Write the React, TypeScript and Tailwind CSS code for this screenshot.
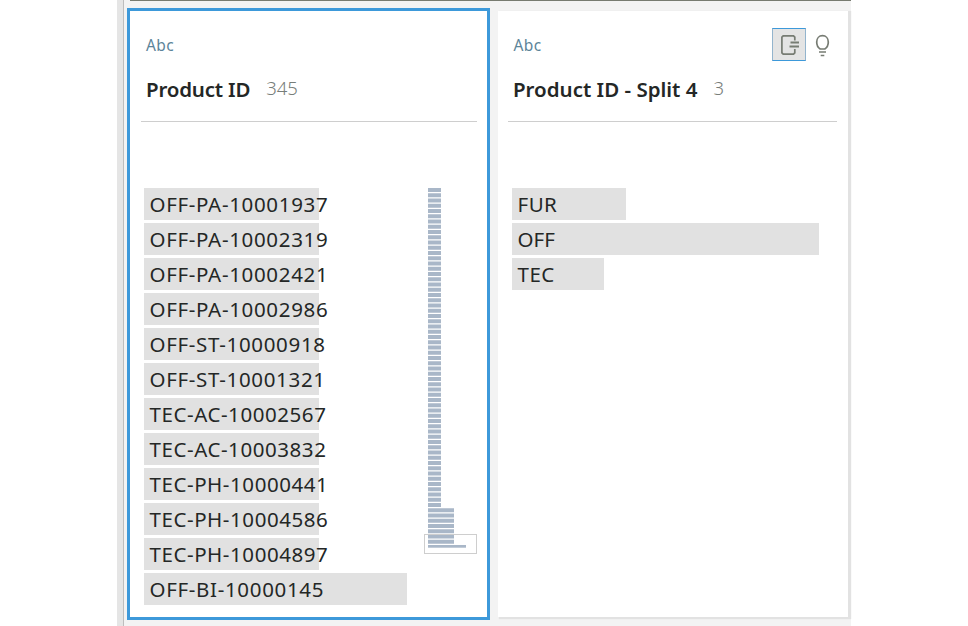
const products = [
  { id: "OFF-PA-10001937" },
  { id: "OFF-PA-10002319" },
  { id: "OFF-PA-10002421" },
  { id: "OFF-PA-10002986" },
  { id: "OFF-ST-10000918" },
  { id: "OFF-ST-10001321" },
  { id: "TEC-AC-10002567", tight: true },
  { id: "TEC-AC-10003832", tight: true },
  { id: "TEC-PH-10000441", tight: true },
  { id: "TEC-PH-10004586", tight: true },
  { id: "TEC-PH-10004897", tight: true },
  { id: "OFF-BI-10000145", wide: true },
];

function Value({ label, bar, spacing }: { label: string; bar: string; spacing: string }) {
  return (
    <li className={`h-8 bg-[#e1e1e1] pl-[5.5px] text-[20.5px] leading-8 whitespace-nowrap text-[#242726] ${bar} ${spacing}`}>
      {label}
    </li>
  );
}

function Heading({ title, count, spacing }: { title: string; count: string; spacing: string }) {
  return (
    <div className="flex h-[49px] items-start gap-[16px] border-b border-[#cecece] pl-[5px] leading-[31px] whitespace-nowrap">
      <h2 className={`text-[20.5px] leading-8 font-semibold text-[#242726] ${spacing}`}>{title}</h2>
      <span className="text-[18.5px] leading-[30px] font-light tracking-[-0.1px] text-[#777d79]">{count}</span>
    </div>
  );
}

// One thin bar per bucket of values; the window marks the visible rows.
function Overview() {
  return (
    <svg className="block h-[367px] w-[54px]" viewBox="424 188 54 367">
      {Array.from({ length: 69 }, (_, i) => (
        <rect
          key={i}
          x="428"
          y={188 + i * 5.25}
          width={i === 68 ? 38 : i > 60 ? 26 : 13}
          height={i === 68 ? 2.7 : 4}
          fill="#a9b7c8"
        />
      ))}
      <rect x="424.5" y="534.5" width="52" height="19" fill="none" stroke="#cecece" />
    </svg>
  );
}

export default function App() {
  return (
    <div className="h-[626px] w-[968px] overflow-hidden bg-white pl-[117px] font-['Noto_Sans','Open_Sans',sans-serif]">
      <div className="flex h-full w-[734px] bg-[#f3f3f3]">
        <div className="w-[7px] shrink-0 border-r border-[#bdbdbd] bg-[#e5e5e5]" />
        <div className="flex min-w-0 flex-1 flex-col">
          <div className="ml-1.5 h-px shrink-0 bg-[#777b70]" />
          <div className="flex pt-[7px] pl-[3px]">
            <section className="h-[612px] w-[363px] shrink-0 border-[3px] border-[#3d99da] bg-white pt-[24px] pl-[11px]">
              <div className="h-[38px] pl-[5px] text-[15.5px] leading-5 tracking-[0.4px] text-[#5c8499]">Abc</div>
              <div className="w-[336px]">
                <Heading title="Product ID" count="345" spacing="tracking-[-0.2px]" />
              </div>
              <div className="mt-[66px] flex pl-[3px]">
                <ul className="flex w-[280px] shrink-0 flex-col gap-[3px]">
                  {products.map((p) => (
                    <Value
                      key={p.id}
                      label={p.id}
                      bar={p.wide ? "w-[263px]" : "w-[175px]"}
                      spacing={p.tight ? "tracking-[0.57px]" : "tracking-[0.67px]"}
                    />
                  ))}
                </ul>
                <Overview />
              </div>
            </section>
            <section className="mt-[3px] ml-[8px] h-[606px] w-[350px] shrink-0 bg-white pt-[17px] pl-[10px] shadow-[2px_1px_1px_1px_#e2e2e2]">
              <div className="flex h-[45px]">
                <div className="w-[264px] pt-[7px] pl-[5.5px] text-[15.5px] leading-5 tracking-[0.4px] text-[#5c8499]">Abc</div>
                <button className="flex h-[33px] w-[34px] items-center justify-center border border-x-[#93b4cd] border-y-[#3d99da] bg-[#e4e4e4]">
                  <svg width="32" height="31" viewBox="773 29 32 31" fill="none" stroke="#777c73" strokeWidth="1.7">
                    <path d="M794.8 40.5V37.2L793.5 35.8H783.2L781.9 37.2V52.8L783.2 54.2H793.5L794.8 52.8V49" />
                    <path d="M790.5 42.5H799M789.5 46.5H799" strokeWidth="2" />
                  </svg>
                </button>
                <svg className="ml-[6px]" width="22" height="33" viewBox="812 28 22 33" fill="none" stroke="#777c73" strokeWidth="1.7">
                  <path d="M820.2 49C817.9 47.5 816.7 45.3 816.7 42C816.7 38.3 819.1 35.7 822.5 35.7S828.3 38.3 828.3 42C828.3 45.3 827.1 47.5 824.8 49Z" />
                  <path d="M819 52H826M820.7 55.5H824.3" />
                </svg>
              </div>
              <div className="w-[329px]">
                <Heading title="Product ID - Split 4" count="3" spacing="tracking-[0px]" />
              </div>
              <ul className="mt-[66px] flex flex-col gap-[3px] pl-[4px]">
                <Value label="FUR" bar="w-[114px]" spacing="tracking-[0.5px]" />
                <Value label="OFF" bar="w-[307px]" spacing="tracking-[0.1px]" />
                <Value label="TEC" bar="w-[92px]" spacing="tracking-[0.5px]" />
              </ul>
            </section>
          </div>
        </div>
      </div>
    </div>
  );
}
